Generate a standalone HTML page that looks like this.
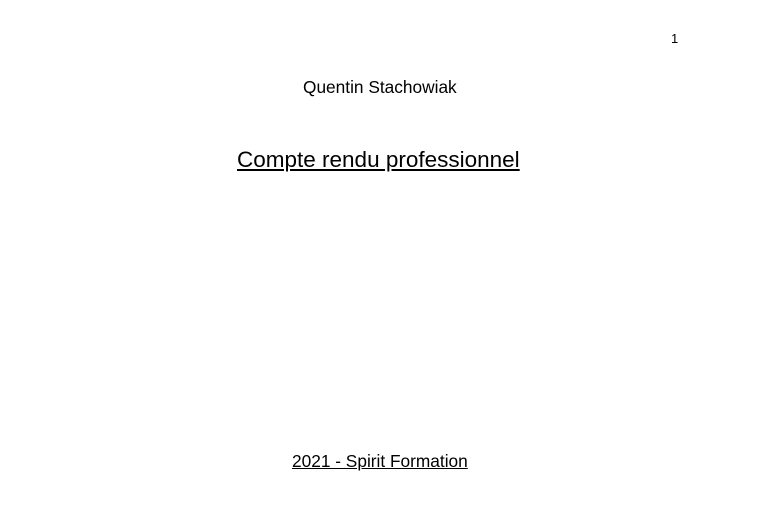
<!DOCTYPE html>
<html><head><meta charset="utf-8"><style>
body{margin:0;width:757px;height:515px;background:#fff;font-family:"Liberation Sans",Arial,sans-serif;color:#000;position:relative;overflow:hidden}
.t{position:absolute;white-space:nowrap;line-height:1}
</style></head><body>
<div class="t" style="left:671px;top:32px;font-size:13px">1</div>
<div class="t" style="left:303px;top:79px;font-size:17.3px">Quentin Stachowiak</div>
<div class="t" style="left:237px;top:149px;font-size:22.5px;text-decoration:underline">Compte rendu professionnel</div>
<div class="t" style="left:292px;top:453px;font-size:17.3px;text-decoration:underline">2021 - Spirit Formation</div>
</body></html>
